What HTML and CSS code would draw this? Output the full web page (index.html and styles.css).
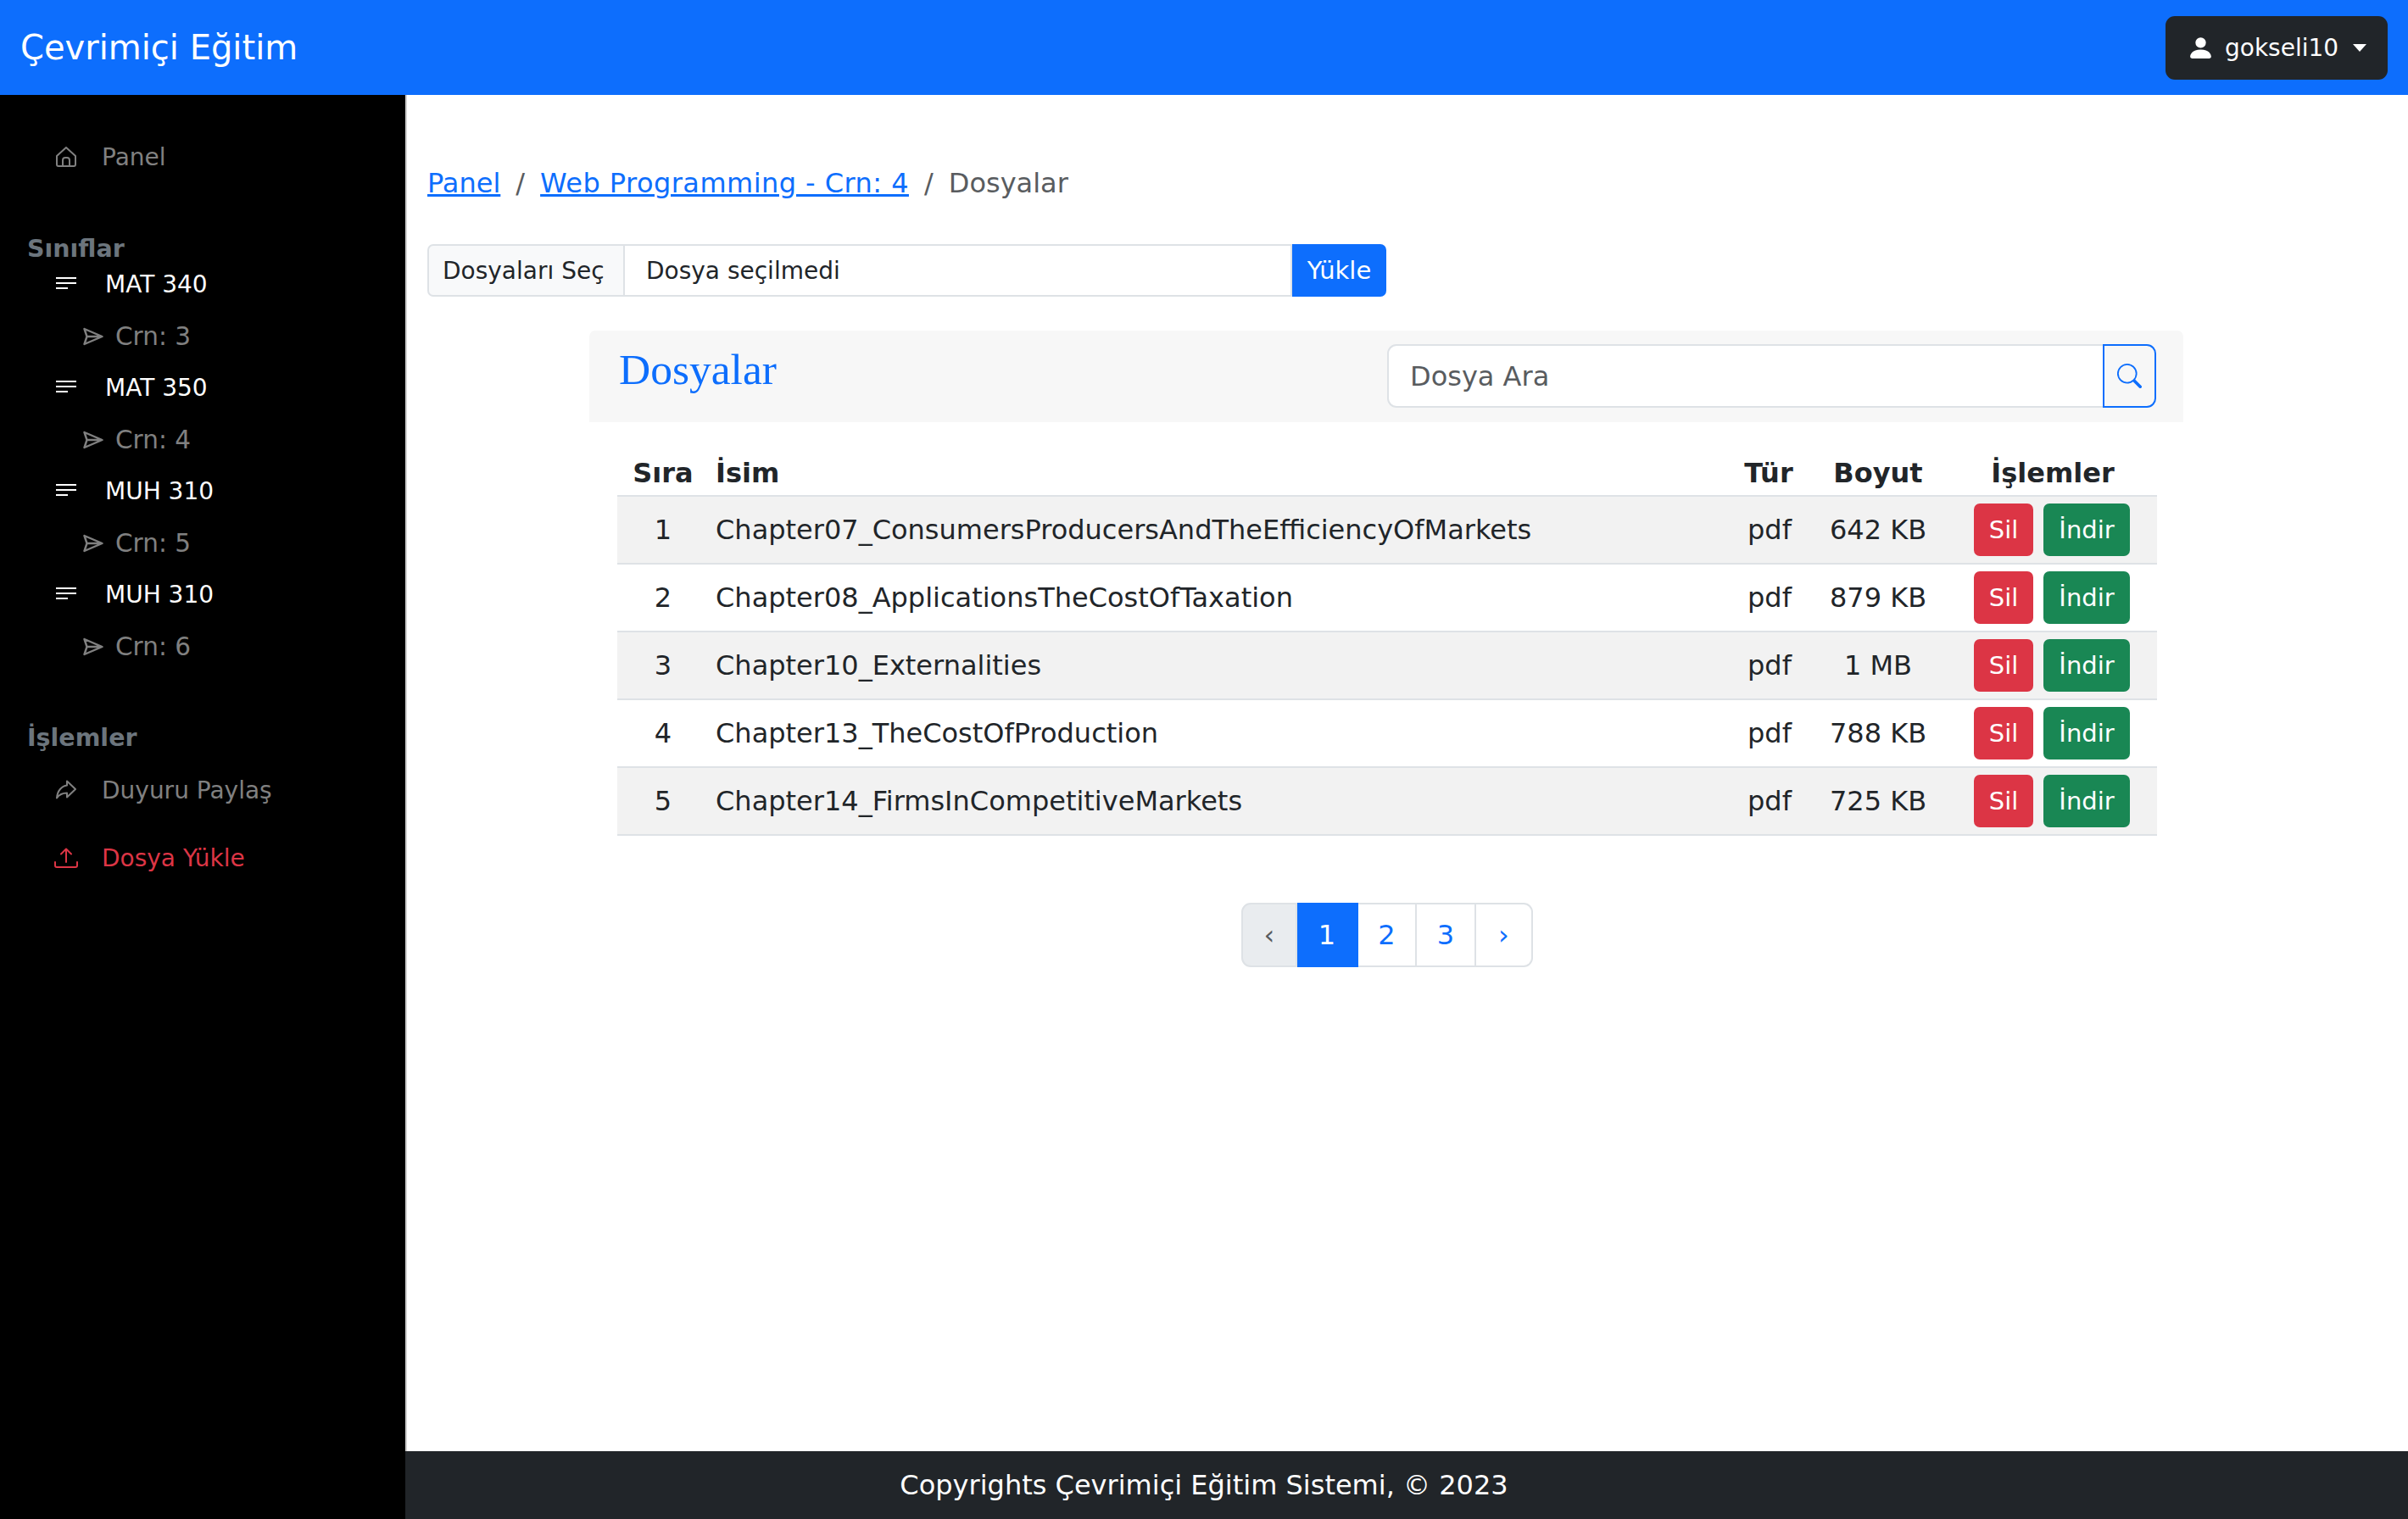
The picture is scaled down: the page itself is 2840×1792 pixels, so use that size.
FILE: index.html
```html
<!DOCTYPE html>
<html lang="tr">
<head>
  <meta charset="UTF-8" />
  <meta name="viewport" content="width=device-width, initial-scale=1" />
  <title>Dosyalar</title>
  <link rel="stylesheet" href="styles.css">
</head>
<body>

<header class="topbar">
  <span class="brand">Çevrimiçi Eğitim</span>
  <button class="user-btn">
    <svg class="user-icon" viewBox="0 0 16 16" fill="currentColor"><path d="M3 14s-1 0-1-1 1-4 6-4 6 3 6 4-1 1-1 1H3zm5-6a3 3 0 1 0 0-6 3 3 0 0 0 0 6z"/></svg>
    gokseli10
    <span class="caret"></span>
  </button>
</header>

<div class="layout">
  <nav class="sidebar">
    <a class="side-link">
      <svg class="side-icon" viewBox="0 0 24 24" fill="none" stroke="currentColor" stroke-width="2" stroke-linejoin="round"><path d="M1 11 12 1l11 10v10a2 2 0 0 1-2 2H3a2 2 0 0 1-2-2z"/><path d="M8 23v-7a3 3 0 0 1 3-3h2a3 3 0 0 1 3 3v7"/></svg>
      Panel
    </a>

    <h6 class="side-heading first">Sınıflar</h6>
    <a class="class-link"><svg class="side-icon" viewBox="0 0 24 24" fill="none" stroke="currentColor" stroke-width="2"><path d="M0 4h24M0 10h24M0 16h14"/></svg>MAT 340</a>
    <a class="crn-link"><svg class="crn-icon" viewBox="0 0 24 24" fill="none" stroke="currentColor" stroke-width="2.400" stroke-linejoin="round"><path d="M1.500 3l21 9-21 9 3-9zM4.500 12h18"/></svg>Crn: 3</a>
    <a class="class-link"><svg class="side-icon" viewBox="0 0 24 24" fill="none" stroke="currentColor" stroke-width="2"><path d="M0 4h24M0 10h24M0 16h14"/></svg>MAT 350</a>
    <a class="crn-link"><svg class="crn-icon" viewBox="0 0 24 24" fill="none" stroke="currentColor" stroke-width="2.400" stroke-linejoin="round"><path d="M1.500 3l21 9-21 9 3-9zM4.500 12h18"/></svg>Crn: 4</a>
    <a class="class-link"><svg class="side-icon" viewBox="0 0 24 24" fill="none" stroke="currentColor" stroke-width="2"><path d="M0 4h24M0 10h24M0 16h14"/></svg>MUH 310</a>
    <a class="crn-link"><svg class="crn-icon" viewBox="0 0 24 24" fill="none" stroke="currentColor" stroke-width="2.400" stroke-linejoin="round"><path d="M1.500 3l21 9-21 9 3-9zM4.500 12h18"/></svg>Crn: 5</a>
    <a class="class-link"><svg class="side-icon" viewBox="0 0 24 24" fill="none" stroke="currentColor" stroke-width="2"><path d="M0 4h24M0 10h24M0 16h14"/></svg>MUH 310</a>
    <a class="crn-link"><svg class="crn-icon" viewBox="0 0 24 24" fill="none" stroke="currentColor" stroke-width="2.400" stroke-linejoin="round"><path d="M1.500 3l21 9-21 9 3-9zM4.500 12h18"/></svg>Crn: 6</a>

    <h6 class="side-heading">İşlemler</h6>
    <a class="side-link">
      <svg class="side-icon" viewBox="0 0 24 24" fill="none" stroke="currentColor" stroke-width="2" stroke-linejoin="round"><path d="M13 1.500 23 11 13 20.500V15.500C8 15.500 4 17 1 21.500 1.500 13 7 7 13 6.500z"/></svg>
      Duyuru Paylaş
    </a>
    <a class="side-link danger">
      <svg class="upload-icon" viewBox="0 0 28 24" fill="none" stroke="currentColor" stroke-width="2" stroke-linecap="round" stroke-linejoin="round"><path d="M1 17v4a2 2 0 0 0 2 2h22a2 2 0 0 0 2-2v-4"/><path d="M14 17V1.500M8 7.500l6-6 6 6"/></svg>
      Dosya Yükle
    </a>
  </nav>

  <div class="page">
    <main class="content">
      <ol class="breadcrumb">
        <li><a href="#">Panel</a></li>
        <li class="sep">/</li>
        <li><a class="course-link" href="#">Web Programming - Crn: 4</a></li>
        <li class="sep">/</li>
        <li class="current">Dosyalar</li>
      </ol>

      <form class="upload-row">
        <span class="file-btn">Dosyaları Seç</span>
        <span class="file-name">Dosya seçilmedi</span>
        <button class="upload-btn" type="button">Yükle</button>
      </form>

      <section class="files">
        <div class="files-header">
          <h4 class="files-title">Dosyalar</h4>
          <div class="search">
            <span class="search-input">Dosya Ara</span>
            <button class="search-btn" type="button">
              <svg viewBox="0 0 16 16" fill="currentColor"><path d="M11.742 10.344a6.500 6.500 0 1 0-1.397 1.398h-.001c.03.04.062.078.098.115l3.850 3.850a1 1 0 0 0 1.415-1.414l-3.850-3.850a1.007 1.007 0 0 0-.115-.1zM12 6.500a5.500 5.500 0 1 1-11 0 5.500 5.500 0 0 1 11 0z"/></svg>
            </button>
          </div>
        </div>

        <table class="file-table">
          <colgroup>
            <col class="col-no"><col class="col-name"><col class="col-type"><col class="col-size"><col class="col-actions">
          </colgroup>
          <thead>
            <tr><th class="no">Sıra</th><th class="left">İsim</th><th>Tür</th><th>Boyut</th><th>İşlemler</th></tr>
          </thead>
          <tbody>
            <tr class="odd"><td class="no">1</td><td class="left">Chapter07_ConsumersProducersAndTheEfficiencyOfMarkets</td><td class="type">pdf</td><td>642 KB</td><td class="actions"><span class="btn red">Sil</span><span class="btn green">İndir</span></td></tr>
            <tr><td class="no">2</td><td class="left">Chapter08_ApplicationsTheCostOfTaxation</td><td class="type">pdf</td><td>879 KB</td><td class="actions"><span class="btn red">Sil</span><span class="btn green">İndir</span></td></tr>
            <tr class="odd"><td class="no">3</td><td class="left">Chapter10_Externalities</td><td class="type">pdf</td><td>1 MB</td><td class="actions"><span class="btn red">Sil</span><span class="btn green">İndir</span></td></tr>
            <tr><td class="no">4</td><td class="left">Chapter13_TheCostOfProduction</td><td class="type">pdf</td><td>788 KB</td><td class="actions"><span class="btn red">Sil</span><span class="btn green">İndir</span></td></tr>
            <tr class="odd"><td class="no">5</td><td class="left">Chapter14_FirmsInCompetitiveMarkets</td><td class="type">pdf</td><td>725 KB</td><td class="actions"><span class="btn red">Sil</span><span class="btn green">İndir</span></td></tr>
          </tbody>
        </table>

        <ul class="pagination">
          <li class="pg prev">‹</li>
          <li class="pg active">1</li>
          <li class="pg num2">2</li>
          <li class="pg num3">3</li>
          <li class="pg next">›</li>
        </ul>
      </section>
    </main>

    <footer class="footer">Copyrights Çevrimiçi Eğitim Sistemi, © 2023</footer>
  </div>
</div>

</body>
</html>
```

FILE: styles.css
```css
* {
  box-sizing: border-box;
}
html, body {
  height: 100%;
}
body {
  margin: 0;
  font-family: "DejaVu Sans", sans-serif;
  font-size: 32px;
  color: #212529;
  background: #fff;
  display: flex;
  flex-direction: column;
}
.topbar {
  height: 112px;
  background: #0d6efd;
  display: flex;
  align-items: center;
  justify-content: space-between;
  padding: 0 24px;
  flex: none;
}
.brand {
  color: #fff;
  font-size: 40px;
}
.user-btn {
  display: flex;
  align-items: center;
  height: 75px;
  width: 262px;
  padding: 0 0 0 25px;
  border: none;
  border-radius: 11px;
  background: #212529;
  color: #fff;
  font: inherit;
  font-size: 28px;
}
.user-icon {
  width: 33px;
  height: 33px;
  margin-right: 12px;
}
.caret {
  margin-left: 17px;
  border-top: 9px solid #fff;
  border-left: 8px solid transparent;
  border-right: 8px solid transparent;
}
.layout {
  flex: 1;
  display: flex;
  min-height: 0;
}
.sidebar {
  width: 478px;
  flex: none;
  background: #000;
  padding-top: 33px;
  font-size: 28px;
  display: flex;
  flex-direction: column;
}
.side-link {
  height: 80px;
  padding-left: 66px;
  display: flex;
  align-items: center;
  color: #808080;
}
.side-link.danger {
  color: #dc3545;
}
.side-icon {
  width: 24px;
  height: 24px;
  margin-right: 30px;
  flex: none;
}
.upload-icon {
  width: 28px;
  height: 24px;
  margin: 0 28px 0 -2px;
  flex: none;
}
.side-heading {
  margin: 67px 0 10px;
  padding-left: 32px;
  height: 22px;
  line-height: 22px;
  font-size: 28.500px;
  font-weight: bold;
  color: #6c757d;
}
.side-heading.first {
  margin: 58px 0 0;
}
.class-link {
  height: 61px;
  padding-left: 66px;
  display: flex;
  align-items: center;
  color: #fff;
}
.class-link .side-icon {
  margin-right: 34px;
}
.crn-link {
  height: 61px;
  padding-left: 98px;
  font-size: 29.500px;
  display: flex;
  align-items: center;
  color: #808080;
}
.crn-icon {
  width: 24px;
  height: 24px;
  margin-right: 14px;
  flex: none;
}
.page {
  flex: 1;
  min-width: 0;
  display: flex;
  flex-direction: column;
}
.content {
  flex: 1;
  padding: 0 24px;
  border-left: 2px solid #d0d0d0;
}
.breadcrumb {
  list-style: none;
  margin: 84px 0 0;
  padding: 0;
  display: flex;
  gap: 18px;
  height: 40px;
  align-items: center;
}
.breadcrumb a {
  color: #0d6efd;
}
.breadcrumb .course-link {
  letter-spacing: .45px;
}
.breadcrumb .sep,
.breadcrumb .current {
  color: #595c5f;
}
.upload-row {
  margin-top: 52px;
  display: flex;
  width: 1131px;
  height: 62px;
  font-size: 28px;
}
.file-btn {
  width: 233px;
  display: flex;
  align-items: center;
  padding-left: 16px;
  background: #f8f9fa;
  border: 2px solid #dee2e6;
  border-radius: 7px 0 0 7px;
}
.file-name {
  flex: 1;
  display: flex;
  align-items: center;
  padding-left: 25px;
  border: 2px solid #dee2e6;
  border-left: none;
}
.upload-btn {
  width: 111px;
  border: none;
  background: #0d6efd;
  color: #fff;
  font: inherit;
  font-size: 29px;
  border-radius: 0 7px 7px 0;
}
.files {
  margin: 40px 0 0 191px;
  width: 1880px;
}
.files-header {
  height: 108px;
  background: #f7f7f7;
  border-radius: 7px 7px 0 0;
  display: flex;
  justify-content: space-between;
  padding: 16px 32px 0 35px;
}
.files-title {
  margin: 0;
  font-family: "Liberation Serif", serif;
  font-weight: normal;
  font-size: 51.500px;
  color: #0d6efd;
}
.search {
  display: flex;
  width: 907px;
  height: 75px;
}
.search-input {
  flex: 1;
  display: flex;
  align-items: center;
  padding-left: 25px;
  background: #fff;
  border: 2px solid #dee2e6;
  border-radius: 11px 0 0 11px;
  border-right: none;
  color: #595c5f;
}
.search-btn {
  width: 63px;
  padding: 0;
  background: transparent;
  border: 2px solid #0d6efd;
  border-radius: 0 11px 11px 0;
  color: #0d6efd;
  display: flex;
  align-items: center;
  justify-content: center;
}
.search-btn svg {
  width: 29px;
  height: 29px;
}
.file-table {
  margin: 0 0 0 33px;
  width: 1816px;
  table-layout: fixed;
  border-collapse: collapse;
}
.col-no { width: 102px; }
.col-type { width: 92px; }
.col-size { width: 166px; }
.col-actions { width: 246px; }
.file-table th {
  height: 87px;
  padding: 33px 0 0;
  font-weight: bold;
  border-bottom: 2px solid #dee2e6;
}
.file-table td {
  height: 80px;
  padding: 0;
  text-align: center;
  border-bottom: 2px solid #dee2e6;
}
.file-table .left {
  text-align: left;
  padding-left: 14px;
}
.file-table .no {
  padding-left: 6px;
}
.file-table .type {
  padding-left: 2px;
}
.file-table .odd {
  background: #f2f2f2;
}
.file-table .actions {
  font-size: 29px;
  padding-right: 2px;
}
.btn {
  display: inline-flex;
  align-items: center;
  justify-content: center;
  height: 62px;
  border-radius: 7px;
  color: #fff;
}
.btn.red {
  width: 70px;
  background: #dc3545;
  margin-right: 12px;
}
.btn.green {
  width: 102px;
  background: #198754;
}
.pagination {
  list-style: none;
  margin: 79px 0 0 769px;
  padding: 0;
  display: flex;
  height: 76px;
  width: 344px;
  color: #0d6efd;
}
.pg {
  display: flex;
  align-items: center;
  justify-content: center;
  border: 2px solid #dee2e6;
  border-left: none;
}
.prev {
  width: 66px;
  background: #e9ecef;
  color: #595c5f;
  border-left: 2px solid #dee2e6;
  border-radius: 11px 0 0 11px;
}
.active {
  width: 72px;
  background: #0d6efd;
  border-color: #0d6efd;
  color: #fff;
}
.num2 { width: 69px; }
.num3 { width: 70px; }
.next {
  width: 67px;
  border-radius: 0 11px 11px 0;
}
.footer {
  height: 80px;
  flex: none;
  background: #212529;
  color: #fff;
  display: flex;
  align-items: center;
  justify-content: center;
  padding-right: 478px;
}
```
